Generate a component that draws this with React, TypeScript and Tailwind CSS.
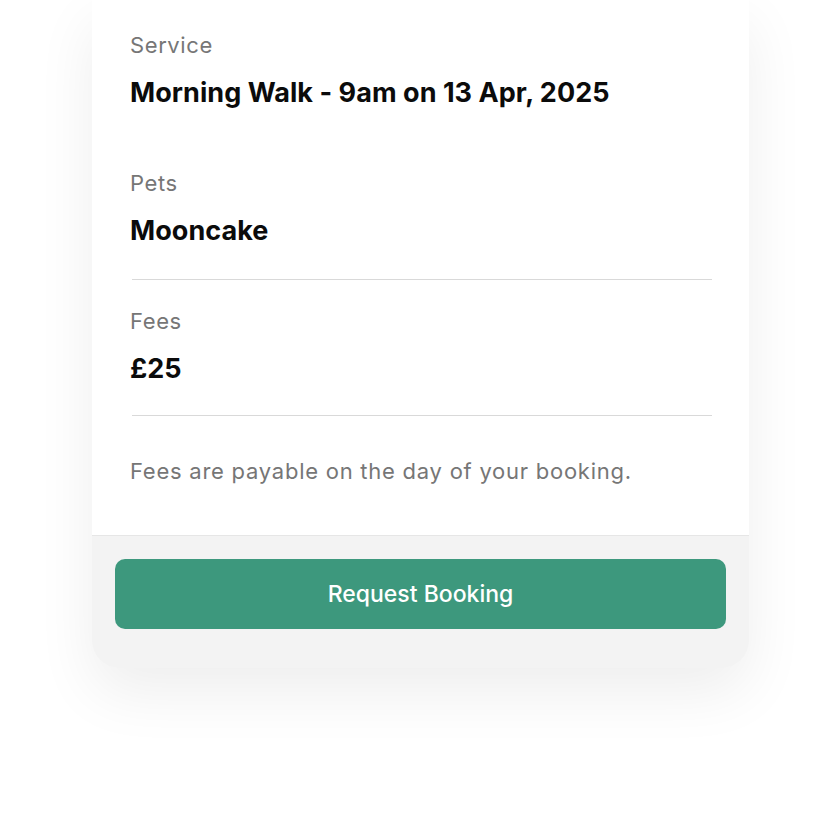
import React from "react";

const font = { fontFamily: "Inter, 'Noto Sans', sans-serif" };

function Field({ label, value, className = "" }: { label: string; value: string; className?: string }) {
  return (
    <div className={`flex flex-col ${className}`}>
      <span className="text-[22px] leading-[30px] tracking-[0.6px] text-[#767676]">{label}</span>
      <span className="mt-[15px] text-[27px] font-bold leading-[36px] tracking-[0.05px] text-[#0b0b0b]">
        {value}
      </span>
    </div>
  );
}

export default function App() {
  return (
    <div className="min-h-[840px] w-[840px] bg-white" style={font}>
      <div className="ml-[92px] w-[657px] overflow-hidden rounded-b-[28px] bg-[#f3f3f3] shadow-[0_24px_60px_rgba(0,0,0,0.07)]">
        <div className="flex flex-col bg-white pl-[38px] pr-[37px] pt-[30px] pb-[49px]">
          <Field label="Service" value="Morning Walk - 9am on 13 Apr, 2025" />
          <Field label="Pets" value="Mooncake" className="mt-[57px]" />
          <div className="ml-[2px] mt-[30px] h-px bg-[#d9d9d9]" />
          <Field label="Fees" value="£25" className="mt-[26px]" />
          <div className="ml-[2px] mt-[28px] h-px bg-[#d9d9d9]" />
          <p className="mt-[40px] text-[22px] leading-[30px] tracking-[0.75px] text-[#767676]">
            Fees are payable on the day of your booking.
          </p>
        </div>
        <div className="border-t border-[#e6e6e6] px-[23px] pt-[23px] pb-[39px]">
          <button className="flex h-[70px] w-full items-center justify-center rounded-[10px] bg-[#3d987d] text-[23px] font-medium text-white">
            Request Booking
          </button>
        </div>
      </div>
    </div>
  );
}
